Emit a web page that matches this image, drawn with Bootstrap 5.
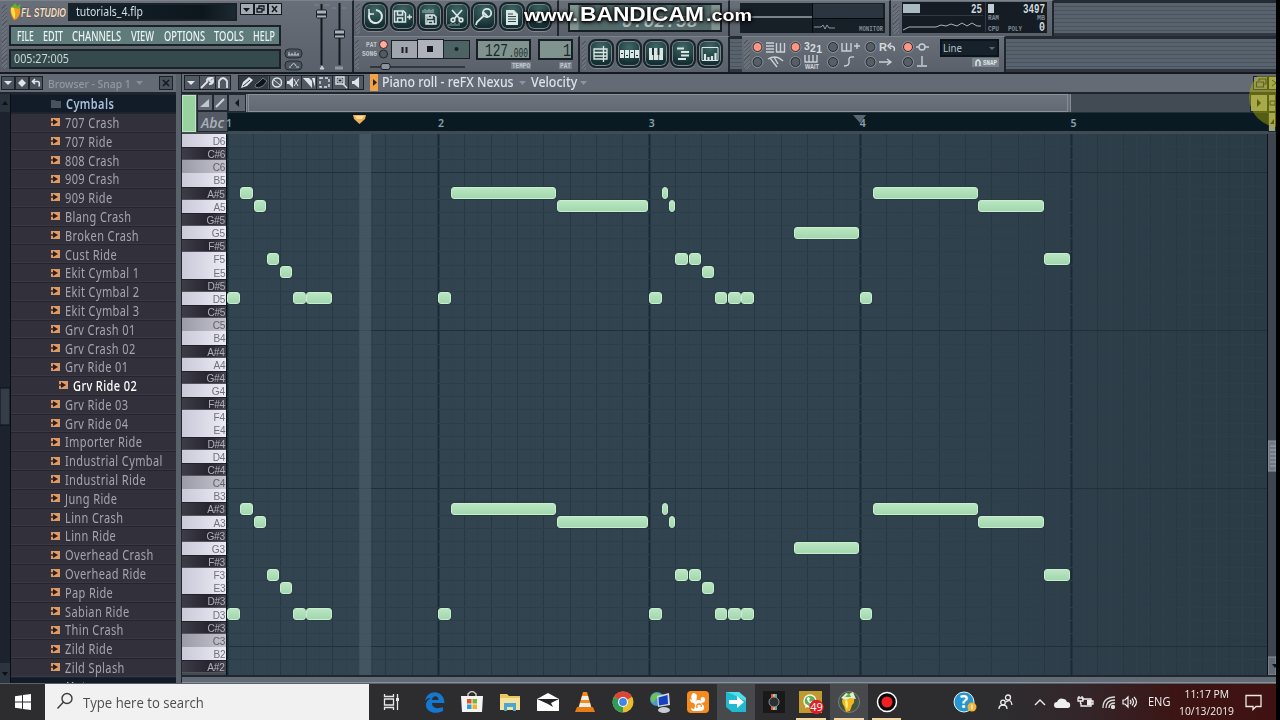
<!DOCTYPE html>
<html lang="en">
<head>
<meta charset="utf-8">
<meta name="viewport" content="width=device-width, initial-scale=1">
<title>FL Studio - tutorials_4.flp</title>
<link rel="stylesheet" href="https://cdn.jsdelivr.net/npm/bootstrap@5.3.0/dist/css/bootstrap.min.css">
<style>
html,body{height:100%}
body{width:1280px;height:720px;overflow:hidden;background:#000;font-family:"Noto Sans","Liberation Sans",sans-serif;line-height:1;color:#d6dee6}
svg{display:block;flex:none}
.app{width:1276px;height:720px;background:#5a616a}
.top{height:74px;border-bottom:2px solid #151a20}
.panel{background:linear-gradient(#686f78,#596069);border-right:2px solid #20262d;border-top:1px solid #7b828a;flex:none;overflow:hidden}
.grip{width:6px;background:repeating-linear-gradient(135deg,#6a717a 0 2px,#505760 2px 3px);flex:none}
.stripes{background:repeating-linear-gradient(#59636e 0 3px,#4a535d 3px 4px);border-top:3px solid #252b33;border-bottom:3px solid #303740}
.sink{border:2px solid #1a2228}
.titlebox{height:18px;background:linear-gradient(90deg,#14232b,#0c171d 80%,#1a2a30);font-size:12px}
.menubox{height:21px;background:#607b7b;color:#e9f5f4;font-size:15px;font-weight:500}
.hintbox{height:20px;background:#344a4c;font-size:12.5px;color:#c5d6d5}
.winb{width:14px;height:12px;background:#a3abb3;border:1px solid #151a20}
.rbtn{width:26px;height:29px;border-radius:8px;background:radial-gradient(circle at 50% 25%,#3f6866,#142f33 75%);border:2px solid #1a252a;box-shadow:0 0 0 1px #7b858b inset,0 1px 0 #828a91;display:flex;align-items:center;justify-content:center;flex:none}
.lcd{background:#81938f;border:2px solid #161f23}
.fit{display:inline-block;white-space:nowrap;transform-origin:0 50%;flex:none}
.main{height:609px}
.browser{width:176px;flex:none;background:#32303a}
.head{height:20px;background:#656b74;border-bottom:2px solid #20252c;flex:none}
.sq{width:14px;height:14px;background:#4b525b;border:1px solid #1c2127;flex:none;display:flex;align-items:center;justify-content:center}
.vs{width:11px;background:#1c232d;border-right:1px solid #0a0d12;flex:none}
.brow{height:18.8px;border-top:1px solid #25242d;border-bottom:1px solid #393943;font-size:14.5px;letter-spacing:.5px;color:#a5a5b1;padding-left:40px;flex:none}
.brow.folder{background:#121c28;color:#a9bcd8;font-weight:600;border-color:#1a2430}
.brow.chosen{color:#fff;padding-left:48px;font-weight:500}
.samp{width:9px;height:8px;background:#dc9a68;position:relative;margin-right:5px;flex:none}
.samp::after{content:"";position:absolute;left:2px;top:1px;border-left:5px solid #2c1c1c;border-top:3px solid transparent;border-bottom:3px solid transparent}
.samp::before{content:"";position:absolute;left:0;top:3px;width:4px;height:2px;background:#6d4636}
.gut{width:6px;background:#59616b;border-right:1px solid #20262c;flex:none}
.pbtn{width:15.5px;height:17px;border:1px solid #22282f;background:#616871;flex:none;display:flex;align-items:center;justify-content:center}
.ruler{background:#0a1a23;height:20px;border-bottom:1px solid #3c4c56;flex:1;position:relative;border-top:1px solid #23303a}
.ruler span{position:absolute;top:5px;font-size:10.5px;font-weight:600;color:#8ba0ad}
.keys{width:45px;height:542px;overflow:hidden;flex:none;border-right:1px solid #06131a}
.pkey{height:13.16px;font:11.5px/14.4px "Liberation Sans",sans-serif;text-align:right;padding-right:1px;letter-spacing:-.3px}
.pkey i{font-style:normal;display:inline-block;transform:scaleX(.88);transform-origin:100% 50%}
.pkey.w{background:linear-gradient(90deg,#c9c9d9,#ecebf4);color:#71717d}
.pkey.c{background:linear-gradient(90deg,#9b9ba8,#c4c3cd);color:#60606c}
.pkey.b{background:linear-gradient(90deg,#3d3c47,#272630 60%,#474650);color:#b0b0bc;border-top:1px solid #23222b;border-bottom:1px solid #55545e;line-height:12.4px}
.roll{position:relative;flex:1;height:541px;overflow:hidden;background:linear-gradient(90deg,#32444f,#31434e 60%,#2a3b46)}
.roll svg,.pnote,.play{position:absolute}
.pnote{height:12px;border-radius:3px;background:linear-gradient(#b8e6c2,#a3d7ae);border:1px solid #c9efd0;box-shadow:0 0 1px #14222b}
.play{left:132px;width:12px;top:0;bottom:0;background:#53656f88}
.bar{height:36px;background:linear-gradient(90deg,#2d2d2f 0 1000px,#33262a 1080px,#3c1413 1180px,#3f1210);font-family:"Open Sans","Noto Sans",sans-serif;color:#f0f0f0}
.find{width:324px;background:#f1f1f1;color:#4d4d4d;font-size:14px}
.tk{width:37.65px;height:36px;display:flex;align-items:center;justify-content:center;flex:none;position:relative}
.tk.on{background:#47494d}.tk.run::after{content:"";position:absolute;bottom:0;left:4px;right:4px;height:2px;background:#f2d6a0}
.halo{position:absolute;left:1249px;top:76px;width:27px;height:51px;overflow:hidden;pointer-events:none}
.halo::after{content:"";position:absolute;left:0;top:-9px;width:60px;height:60px;border-radius:50%;background:#b5b50070}
.wm{position:absolute;left:516px;top:0}
</style>
<script src="https://cdn.jsdelivr.net/npm/bootstrap@5.3.0/dist/js/bootstrap.bundle.min.js"></script>
</head>
<body>
<div class="app d-flex flex-column">
<header class="top d-flex">
  <!-- title, menu and hint -->
  <section class="panel d-flex" style="width:354px">
    <div class="grip" style="margin:4px 1px 4px 2px;width:5px"></div>
    <div class="d-flex flex-column" style="width:274px;padding-left:1px">
      <div class="d-flex align-items-start" style="height:23px;padding-top:2px">
        <svg width="59" height="20" viewBox="9 2 59 20"><path d="M11 6q-2 6 3 13q7-2 6-12q-3-4-9-1z" fill="#f39a20"/><path d="M11 7q0 7 4 11q1-6-1-11z" fill="#ffe24a"/><path d="M12 6l3-4 2 3 4-2-2 5z" fill="#5cb52c"/><text x="21" y="16" font-family="Liberation Sans" font-weight="700" font-style="italic" font-size="12.5" textLength="45" lengthAdjust="spacingAndGlyphs" fill="#f3dcc0" stroke="#27201c" stroke-width=".5" paint-order="stroke">FL STUDIO</text></svg>
        <div class="sink titlebox d-flex align-items-center ps-1" style="width:170px"><span class="fit" data-w="67" style="margin-left:2px">tutorials_4.flp</span></div>
        <div class="d-flex" style="margin-left:3px"><div class="winb"><svg width="12" height="10"><path d="M2 4h7l-3.500 4z" fill="#15191e"/></svg></div><div class="winb"><svg width="12" height="10" fill="none" stroke="#15191e" stroke-width="1.300"><path d="M4 4V2h5v4H7M2 4.500h5v3.500H2z"/></svg></div><div class="winb"><svg width="12" height="10" stroke="#15191e" stroke-width="1.500"><path d="M3 2l5 6M8 2L3 8"/></svg></div></div>
      </div>
      <div class="sink menubox d-flex align-items-center" style="width:272px;padding-left:6px;margin-top:1px">
        <span class="fit" data-w="17" data-g="9">FILE</span><span class="fit" data-w="20" data-g="9">EDIT</span><span class="fit" data-w="49" data-g="10">CHANNELS</span><span class="fit" data-w="23" data-g="10">VIEW</span><span class="fit" data-w="41" data-g="9">OPTIONS</span><span class="fit" data-w="30" data-g="9">TOOLS</span><span class="fit" data-w="22">HELP</span>
      </div>
      <div class="sink hintbox d-flex align-items-center" style="width:272px;padding-left:3px;margin-top:3px"><span class="fit" data-w="55">005:27:005</span></div>
    </div>
    <svg width="70" height="72" viewBox="282 1 70 72"><g fill="#4c545d" stroke="#232a31"><rect x="285" y="49" width="17" height="9" rx="4"/><rect x="285" y="61" width="17" height="9" rx="4"/></g><path d="M288 55h11M289 55v-3m3 3v-2m3 2v-3m3 3v-2M289 67h2m5 0h3M291 66q3-5 5 0" stroke="#c6ced5" fill="none"/><path d="M314 5h5M324 5h5M332 8h4M342 8h4" stroke="#7c848c"/><path d="M321.500 4v61M339.500 3v62" stroke="#14191f" stroke-width="2"/><g fill="#aab3ba" stroke="#1b2127"><rect x="316.500" y="10" width="10" height="8" rx="1"/><rect x="334.500" y="30" width="10" height="8" rx="1"/></g><path d="M317 14.500h9M335 34.500h9" stroke="#22282e" stroke-width="2"/><path d="M320 69h4l-2-3zM336 69.500v-3m2 3v-3m2 3v-3m2 3v-3" fill="#c6ced5" stroke="#c6ced5"/></svg>
  </section>
  <div class="d-flex flex-column flex-grow-1">
    <div class="d-flex" style="height:36px">
      <section class="panel d-flex" style="width:205px;gap:1.3px;padding-top:1px"><div class="grip" style="margin:2px 1px 2px 2px;width:4px"></div>
        <div class="rbtn"><svg width="20" height="20" fill="none" stroke="#dce7e5" stroke-width="2"><path d="M5 6a6.500 6.500 0 1 0 6-3"/><path d="M4 2v5h5" stroke-width="1.500"/></svg></div>
        <div class="rbtn"><svg width="20" height="20" fill="none" stroke="#dce7e5" stroke-width="1.500"><path d="M1.500 4h9l2 2v9h-11zM4.500 4v4h5V4M4.500 15v-4h5v4M14 10h5M16.500 7.500v5"/></svg></div>
        <div class="rbtn"><svg width="20" height="20" fill="none" stroke="#dce7e5" stroke-width="1.500"><path d="M6 8h8l2 2v7H6zM8 8v3h4V8M8 17v-3h5v3"/><path d="M3 3v3m2-4v4m2-3v3m2-4v4m2-3v3m2-4v4" stroke-width="1" opacity=".7"/></svg></div>
        <div class="rbtn"><svg width="20" height="20" fill="none" stroke="#dce7e5" stroke-width="1.700"><path d="M5 3l8 9M15 3l-8 9"/><circle cx="6" cy="13" r="1.800"/><circle cx="14" cy="13" r="1.800"/><path d="M2 17v2m2-3v3m2-2v2m2-3v3m2-2v2m2-3v3" stroke-width="1" opacity=".6"/></svg></div>
        <div class="rbtn"><svg width="20" height="20" fill="none" stroke="#dce7e5" stroke-width="1.800"><circle cx="13" cy="6" r="4.200"/><path d="M9 5l5 5M9.500 9L3 15l-1 3" /></svg></div>
        <div class="rbtn"><svg width="20" height="20"><path d="M4 3h8l4 4v11H4z" fill="#dce7e5"/><path d="M6 7h5M6 9.500h8M6 12h8M6 14.500h8" stroke="#29484a"/></svg></div>
        <div class="rbtn"><svg width="20" height="20"><circle cx="10" cy="10" r="5" fill="none" stroke="#dce7e5" stroke-width="2"/></svg></div>
      </section>
      <section class="panel d-flex" style="width:171px;padding:2px 6px 2px 9px"><svg class="lcd" width="154" height="29" viewBox="0 0 154 29"><rect width="154" height="29" fill="#53696a"/><text x="50" y="26" font-family="Liberation Mono" font-weight="700" font-style="italic" font-size="19" textLength="88" lengthAdjust="spacingAndGlyphs" fill="#b4c3c2">0:02:58</text></svg></section>
      <section class="panel d-flex" style="width:161px;padding:2px 5px 2px 10px"><svg width="145" height="30" viewBox="740 3 145 30"><rect x="740" y="3" width="145" height="30" fill="#171f27"/><rect x="813" y="4" width="70" height="14" fill="#2b3540"/><path d="M812.500 3v30M813 18.500h71" stroke="#05090d"/><path d="M741 17h71" stroke="#dfe6ea"/><path d="M814 27h7l2-2 2 4 2-4 2 3h6" stroke="#8d98a3" fill="none"/><text x="859" y="31" font-size="7" font-weight="700" font-family="Liberation Mono" textLength="24" lengthAdjust="spacingAndGlyphs" fill="#7f8993">MONITOR</text></svg></section>
      <section class="panel d-flex" style="width:163px;padding-top:1px"><div class="grip" style="margin:2px 3px 2px 2px"></div><svg width="145" height="31" viewBox="902 2 145 31"><rect x="902" y="2" width="145" height="31" fill="#151c24"/><path d="M903 15.500h80M985.500 2v30" stroke="#303b46"/><rect x="903" y="4" width="17" height="9" fill="#a9bbc1"/><rect x="988" y="4" width="6" height="9" fill="#c0cdd0"/><path d="M903 30l6-3h27l5-2 5 1 5-2 6 2 5-3 5 3 5-3 5 3h4" fill="none" stroke="#a8b4ba"/><g font-family="Liberation Mono" font-weight="700" fill="#cfd8dc"><text x="971" y="13" font-size="12" textLength="11" lengthAdjust="spacingAndGlyphs">25</text><text x="1023" y="13" font-size="12" textLength="22" lengthAdjust="spacingAndGlyphs">3497</text><text x="1039" y="31" font-size="12" textLength="6" lengthAdjust="spacingAndGlyphs">0</text><g font-size="7" fill="#7f8993"><text x="988" y="20" textLength="11" lengthAdjust="spacingAndGlyphs">RAM</text><text x="1037" y="20" textLength="8" lengthAdjust="spacingAndGlyphs">MB</text><text x="988" y="31" textLength="11" lengthAdjust="spacingAndGlyphs">CPU</text><text x="1008" y="31" textLength="14" lengthAdjust="spacingAndGlyphs">POLY</text></g></g></svg></section>
      <div class="stripes flex-grow-1"></div>
    </div>
    <div class="d-flex" style="height:36px">
      <section class="panel d-flex" style="width:226px"><div class="grip" style="margin:3px 1px;width:4px"></div>
        <svg width="217" height="35" viewBox="360 37 217 35"><g font-family="Liberation Mono" font-weight="700" font-size="7" fill="#c0c8cf"><text x="366" y="47" textLength="11" lengthAdjust="spacingAndGlyphs">PAT</text><text x="362" y="56" textLength="15" lengthAdjust="spacingAndGlyphs">SONG</text><rect x="511" y="62" width="20" height="7" fill="#78818a"/><text x="512" y="68" textLength="18" lengthAdjust="spacingAndGlyphs">TEMPO</text><rect x="559" y="62" width="13" height="7" fill="#78818a"/><text x="560" y="68" textLength="11" lengthAdjust="spacingAndGlyphs">PAT</text></g><circle cx="383.500" cy="44.500" r="4" fill="#ffab9a" stroke="#33272a"/><circle cx="383.500" cy="54" r="4" fill="#515b60" stroke="#20272b"/><g stroke="#1a2025"><rect x="391.500" y="40.500" width="26" height="18" fill="#a1a5ae"/><rect x="417.500" y="39.500" width="26" height="19" fill="#aeb2ba"/><rect x="443.500" y="40.500" width="26" height="18" fill="#4d6263"/></g><path d="M402.500 47v6M406.500 47v6" stroke="#1a1e22" stroke-width="2"/><rect x="427" y="46" width="6" height="6" fill="#15181b"/><circle cx="456.500" cy="49" r="2" fill="#172124"/><path d="M370 67h95" stroke="#232a30" stroke-width="1.500"/><rect x="381" y="63.500" width="9" height="6" rx="2" fill="#8b949c" stroke="#1d2328"/><g fill="#81938f" stroke="#161f23" stroke-width="2"><rect x="477" y="40" width="53" height="19"/><rect x="539" y="40" width="33" height="19"/></g><g font-family="Liberation Mono" fill="#17272a"><text x="485" y="56" font-size="18" textLength="23" lengthAdjust="spacingAndGlyphs">127</text><text x="509" y="57" font-size="12" textLength="19" lengthAdjust="spacingAndGlyphs">.000</text><text x="563" y="56" font-size="18" textLength="8" lengthAdjust="spacingAndGlyphs">1</text></g></svg>
      </section>
      <section class="panel d-flex" style="width:150px;gap:1.3px;padding-top:2px"><div class="grip" style="margin:2px 1px 2px 2px;width:4px"></div>
        <div class="rbtn"><svg width="20" height="20" fill="none" stroke="#dce7e5" stroke-width="1.300"><path d="M3 5h13v10H3zM3 8.500h13M3 12h13M12.500 2v16"/></svg></div>
        <div class="rbtn"><svg width="20" height="20" fill="#dce7e5"><path d="M1 6h4v8H1zM6 6h4v8H6zM11 6h4v8h-4zM16 6h4v8h-4z"/><path d="M2 9h2v1H2zM7 11h2v1H7zM12 8h2v1h-2zM17 11h2v1h-2z" fill="#163033"/></svg></div>
        <div class="rbtn"><svg width="20" height="20" fill="#dce7e5"><path d="M3 4h14v12H3z"/><path d="M6 4h2v7H6zM11.500 4h2v7h-2zM7 11h.700v5H7zM12.400 11h.700v5h-.700z" fill="#163033"/></svg></div>
        <div class="rbtn"><svg width="20" height="20" stroke="#dce7e5" stroke-width="2"><path d="M4 4.500h7M8 8h8M8 11.500h8M5 15h8"/></svg></div>
        <div class="rbtn"><svg width="20" height="20" fill="none" stroke="#dce7e5"><path d="M2 3.500h16v13H2z"/><path d="M5 16v-6M8.500 16v-3M12 16v-4M15.500 16v-7" stroke-width="2.200"/></svg></div>
      </section>
      <div class="stripes" style="width:12px"></div>
      <section class="panel d-flex" style="width:264px"><div class="grip" style="margin:3px 0 3px 2px;width:6px"></div>
        <svg width="254" height="36" viewBox="750 37 254 36"><g id="leds"></g><g fill="none" stroke="#c8cfd5" stroke-width="1.400"><path d="M766 43h8M766 46h8M766 49h8M766 52h8M776.500 43v9h8v-9M780.500 43v9M768 59q8-5 15 2M770 58l7 9M774 57l4 7"/><path d="M805 55v7h12v-7M809 55v7M813 55v7M842 43v8h9v-8M846.500 43v8M854 46h6M857 43v6M844 66q6 0 5-5t5-4M879 62h11M887 59l4 3-4 3M916 47h3M925 47h4"/><circle cx="922" cy="47" r="3"/><path d="M917 66h10M922 65v-9"/></g><g fill="#d3dae0" font-weight="700" font-family="Liberation Sans"><text x="804" y="50" font-size="10.500" textLength="18">3<tspan dy="2">2</tspan><tspan dy="1">1</tspan></text><text x="879" y="51" font-size="11">R</text><text x="805" y="69" font-size="6.500" textLength="14" lengthAdjust="spacingAndGlyphs">WAIT</text></g><path d="M894 51q2-5-4-5M891 43l-3 3 3 3" fill="none" stroke="#d3dae0" stroke-width="1.500"/><rect x="941" y="40" width="57" height="16" fill="#17212b" stroke="#0c1319" stroke-width="2"/><text x="943" y="52" font-family="Noto Sans" font-size="11" textLength="19" lengthAdjust="spacingAndGlyphs" fill="#b8c3cb">Line</text><path d="M989 47h6l-3 3z" fill="#5c6873"/><rect x="972" y="58" width="27" height="9" fill="#7b848d"/><path d="M976 66v-4q2-4 4 0v4" fill="none" stroke="#dce2e7" stroke-width="1.500"/><text x="983" y="65" font-size="7" font-weight="700" font-family="Liberation Mono" textLength="14" lengthAdjust="spacingAndGlyphs" fill="#dce2e7">SNAP</text></svg>
      </section>
      <div class="stripes flex-grow-1"></div>
    </div>
  </div>
</header>

<main class="main d-flex overflow-hidden">
  <aside class="browser d-flex flex-column">
    <div class="head d-flex align-items-center" style="padding-left:1px">
      <div class="sq"><svg width="10" height="8"><path d="M1 2h8L5 6z" fill="#dfe5ea"/></svg></div><div class="sq"><svg width="10" height="10"><path d="M5 1l4 4-4 4-4-4z" fill="#dfe5ea"/></svg></div><div class="sq"><svg width="10" height="10" fill="none" stroke="#dfe5ea" stroke-width="1.600"><path d="M4 1L1.500 3.500 4 6M2 3.500h5q2 0 1 5"/></svg></div>
      <span class="fit" data-w="83" style="margin-left:5px;font-size:11px;font-weight:500;color:#9299a2">Browser - Snap 1</span>
      <svg width="10" height="6" class="ms-1"><path d="M1 1h7L4.500 5z" fill="#858d96"/></svg>
      <div class="sq ms-auto" style="margin-right:3px"><svg width="10" height="10" stroke="#14191f" stroke-width="1.600"><path d="M2 2l6 6M8 2L2 8"/></svg></div>
    </div>
    <div class="d-flex flex-grow-1 overflow-hidden">
      <div class="vs d-flex flex-column"><svg width="10" height="589"><rect width="10" height="18" fill="#29313b"/><path d="M2 11h6L5 7z" fill="#0c1015"/><rect y="294" width="10" height="37" fill="#353d48" stroke="#0c1118"/><rect y="569" width="10" height="20" fill="#2c343f"/><path d="M2 578h6l-3 4z" fill="#0c1015"/></svg></div>
      <div id="files" class="flex-grow-1 overflow-hidden"></div>
    </div>
  </aside>
  <div class="gut"></div>
  <section class="flex-grow-1 d-flex flex-column overflow-hidden" style="background:#424a53">
    <div class="head d-flex align-items-center" style="padding-left:1px">
      <svg width="195" height="18" viewBox="183 75 195 18"><g fill="#525962" stroke="#1b2026"><rect x="184.500" y="76.500" width="46" height="14"/><rect x="238.500" y="76.500" width="125" height="14"/></g><path d="M199.500 77v14M215.500 77v14M253.500 77v14M269.500 77v14M285.500 77v14M301.500 77v14M316.500 77v14M332.500 77v14M348.500 77v14" stroke="#20262c"/><rect x="239" y="77" width="29" height="13" fill="#343a42"/><path d="M187 82h8l-4 4z" fill="#e0e5ea"/><g fill="none" stroke="#dde3e8" stroke-width="1.800"><path d="M201 89l7-7M207 83q-1-5 5-4l-3 2 2 2 2-2q1 4-4 4M219 89v-7q4-6 8 0v7"/><circle cx="277" cy="83.500" r="4.500" stroke-width="1.500"/><path d="M274 81l6 5" stroke-width="1"/><path d="M320 79h9v9h-9z" stroke-dasharray="3 2" stroke-width="1.400"/><path d="M336 78h8v7h-8zM343 85l4 4" stroke-width="1.400"/></g><g fill="#dde3e8"><path d="M241 89l2-6 6-5 4 3-6 6z"/><path d="M287 82h2l4-4v11l-4-4h-2z"/><path d="M303 79h6l3 3v7z"/><path d="M312 79h3v9z"/><path d="M352 82h2l5-4v11l-5-4h-2z"/></g><path d="M294 80l4 7M299 80l-5 7M338 80h4v3h-4z" stroke="#dde3e8" fill="#222"/><path d="M243 87l7-6" stroke="#30363d"/><path d="M255 88q-1-3 4-5l4-4 4 3-4 5q-5 3-8 1z" fill="#11151a" stroke="#707982"/><rect x="370" y="75" width="8" height="17" fill="#f0a14a"/><path d="M373 80l4 3.500-4 3.500z" fill="#302318"/></svg>
      <span class="fit" data-w="132" style="font-size:13.5px;color:#dbe2e9;font-weight:500;margin-left:4px">Piano roll - reFX Nexus</span>
      <svg width="17" height="6"><path d="M5 1h7L8.500 5z" fill="#8c949d"/></svg>
      <span class="fit" data-w="46" style="font-size:13.5px;color:#dbe2e9;font-weight:500">Velocity</span>
      <svg width="12" height="6"><path d="M3 1h7L6.500 5z" fill="#8c949d"/></svg>
      <div class="sq ms-auto" style="background:#858b91;width:15px"><svg width="12" height="12" fill="none" stroke="#22282e" stroke-width="1.200"><path d="M4 4V2h7v5H9M1.500 5h7v5h-7z"/></svg></div><div class="sq" style="width:8px;background:#9ea380;border-right:0"><svg width="6" height="8" stroke="#22282e"><path d="M2 1l4 3-4 3" fill="none"/></svg></div>
    </div>
    <div class="d-flex" style="height:39px">
      <div style="width:14px;margin:1px 1px 1px 0;background:#98d29f;border:1px solid #bde6c1;flex:none"></div>
      <div style="width:31px;flex:none"><div class="d-flex"><div class="pbtn"><svg width="12" height="12"><path d="M1 10L10 2v8z" fill="#bfc6cd"/></svg></div><div class="pbtn"><svg width="12" height="12"><path d="M2 10l8-8" stroke="#cdd4da" stroke-width="2"/></svg></div></div>
        <div class="text-center" style="border:1px solid #22282f;height:21px;background:#535a64;color:#a8b1ba;font:italic 600 14px/21px 'Open Sans',sans-serif">Abc</div></div>
      <div class="flex-grow-1 d-flex flex-column">
        <div class="d-flex" style="height:18px"><div class="pbtn" style="width:18px;height:18px"><svg width="10" height="10"><path d="M7 1v8L3 5z" fill="#14191e"/></svg></div>
          <div style="width:825px;background:linear-gradient(#6d747d,#626973);border:1px solid #8a929a;border-left:3px double #858d96;border-right:4px double #858d96"></div>
          <div class="flex-grow-1"></div><div class="pbtn" style="width:18px;height:18px;background:#9ea380"><svg width="10" height="10"><path d="M3 1v8l4-4z" fill="#14191e"/></svg></div><div class="pbtn" style="width:8px;height:18px;background:#9ea380"><svg width="6" height="10"><path d="M1 3h5v4H1z" fill="none" stroke="#22282e"/></svg></div></div>
        <div class="d-flex"><div class="ruler" id="ruler"><svg width="640" height="18" style="position:absolute;left:-1px;top:1px"><path d="M126 1h13l-1 4-5.500 5-5.500-5z" fill="#f2ae53"/><path d="M128 2h9l-2 3h-5z" fill="#ffe0a0"/><path d="M626 1h13l-6 8z" fill="#586671"/></svg></div><div class="pbtn" style="width:8px;height:20px;background:#9ea380"><svg width="6" height="8"><path d="M1 6l4-5v5z" fill="#14191e"/></svg></div></div>
      </div>
    </div>
    <div class="d-flex" style="height:541px;margin-top:1px">
      <div class="keys" id="keys"></div>
      <div class="roll" id="roll"></div>
      <div style="width:9px;background:#3e454e;border-left:1px solid #0b1218;flex:none"><svg width="8" height="541"><rect y="307" width="8" height="30" fill="#707880" stroke="#9199a0"/><path d="M2 312h6m-6 4h6m-6 4h6m-6 4h6m-6 4h6m-6 4h6" stroke="#a0a8ae"/><rect y="523" width="8" height="18" fill="#626a73" stroke="#8a929a"/><path d="M4 530h6l-3 4z" fill="#14191e"/></svg></div>
    </div>
    <div class="flex-grow-1" style="background:#626b75;border-top:2px solid #20272e;border-bottom:1px solid #89929a"></div>
  </section>
</main>

<footer class="bar d-flex" style="margin-top:1px">
  <div class="d-flex align-items-center" style="width:45px;padding-left:15px"><svg width="16" height="16" fill="#fff"><path d="M0 2.300L7 1.200v6.300H0zM8 1.100L16 0v7.500H8zM0 8.500h7v6.300L0 13.700zM8 8.500h8V16l-8-1.100z"/></svg></div>
  <div class="find d-flex align-items-center"><svg width="18" height="18" style="margin:-2px 9px 0 11px" fill="none" stroke="#3c3c3c" stroke-width="1.400"><circle cx="11" cy="6.500" r="5"/><path d="M7.500 10L1.500 16.500"/></svg><span class="fit" data-w="121" style="padding-top:2px">Type here to search</span></div>
  <div class="tk" style="width:46px;margin-right:1px"><svg width="18" height="16" fill="none" stroke="#e8e8e8" stroke-width="1.300"><path d="M1.500 0v2.500h9V0M1.500 5h9v6h-9zM1.500 16v-2.500h9V16M14.500 0v16"/><path d="M13 4h3v3h-3z" fill="#e8e8e8" stroke="none"/></svg></div>
  <div class="tk"><svg width="22" height="22"><path d="M1 10C3-2 20-2 20.500 12H8c0 6 7 6 11 4v4c-8 4-17 1-17-6 0-4 3-6 5-7-3 0-5 1-6 3zm7-1h6.500c0-5-6-5-6.500 0z" fill="#1478d0"/></svg></div>
  <div class="tk"><svg width="24" height="24"><path d="M8 7V4q4-5 8 0v3" fill="none" stroke="#c9c9c9" stroke-width="1.500"/><path d="M1 6h22l-1 16H2z" fill="#f4f4f4"/><path d="M7 9h4.500v4.500H7z" fill="#e4512b"/><path d="M12.500 9H17v4.500h-4.500z" fill="#7db52d"/><path d="M7 14.500h4.500V19H7z" fill="#2b9fd9"/><path d="M12.500 14.500H17V19h-4.500z" fill="#f3b322"/></svg></div>
  <div class="tk"><svg width="22" height="20"><path d="M1 2h7l2 2h11v14H1z" fill="#e9c765"/><path d="M1 6h20v12H1z" fill="#f8e29a"/><path d="M5 19v-8h12v8h-3v-4H8v4z" fill="#47a8d8"/></svg></div>
  <div class="tk"><svg width="24" height="20"><path d="M1 7l11-6 11 6v12H1z" fill="#fff"/><path d="M1 7h22l-8 4 2 4-5-3z" fill="#242424"/></svg></div>
  <div class="tk"><svg width="22" height="22"><path d="M9 1h4l5 17H4z" fill="#f28a1c"/><path d="M8 5h6l1 4H7zM6 12h10l1 4H5z" fill="#f2efea"/><path d="M3 16h16l2 5H1z" fill="#e97b13"/></svg></div>
  <div class="tk"><svg width="22" height="22" viewBox="-11 -11 22 22"><circle r="10.500" fill="#e9be2e"/><path d="M0 0L-9.100-5.200A10.500 10.500 0 0 1 9.100-5.200z" fill="#db4437"/><path d="M0 0L-9.100-5.200A10.500 10.500 0 0 0 0 10.500z" fill="#2f9c57"/><circle r="5" fill="#fff"/><circle r="3.900" fill="#4285e8"/></svg></div>
  <div class="tk"><svg width="24" height="24"><circle cx="8" cy="9" r="7" fill="#479bc4"/><path d="M3 5q4-4 9 0l-5 4-3 4q-4-4-1-8z" fill="#71bf58"/><path d="M8 6l12-3 1 12-12 2z" fill="#cfd7df"/><path d="M9.500 7.500l9-2.500.500 9-9 1.500z" fill="#1740be"/><ellipse cx="15" cy="20" rx="6" ry="3" fill="#c6ccd2"/></svg></div>
  <div class="tk"><svg width="24" height="24"><rect x="1" y="1" width="22" height="22" rx="4" fill="#f58a1e"/><path d="M7 3q4 0 4 4 0 3-2 4 4-2 6 0-1-3 1-4 4 0 3 4-1 2-4 2l3 3q1 5-4 5H8q-3 0-3-3l3 1q2-4 0-6-4 0-4-4l2 1Q4 6 7 3z" fill="#fff"/><path d="M11 18q-1-4 2-4t2 3" fill="none" stroke="#f58a1e" stroke-width="1.300"/></svg></div>
  <div class="tk on"><svg width="22" height="22"><path d="M1 1h13l7 6v14H7l-6-5z" fill="#20b9d0"/><path d="M1 1h13l7 6v3L7 3z" fill="#4de0e8"/><path d="M4 9h8V5l7 6-7 6v-4H4z" fill="#fff"/></svg></div>
  <div class="tk"><svg width="22" height="22"><rect width="22" height="22" fill="#191919"/><path d="M8 3h6v16H8z" fill="#59a5b8"/><path d="M8 3h2v16H8z" fill="#df5948"/><path d="M10 3h2v16h-2z" fill="#e9b950"/><circle cx="11" cy="11" r="5" fill="#2b2f33" stroke="#8c9297"/></svg></div>
  <div class="tk run"><svg width="26" height="24" style="overflow:visible"><rect x="1" y="1" width="23" height="22" fill="#c09a2e"/><circle cx="12" cy="11" r="6" fill="#5daf57" stroke="#f3f3e8" stroke-width="1.500"/><path d="M7 18l1-4 3 2z" fill="#fff"/><path d="M9 8q0 5 5 6l1-2-2-1-1 1-1-2 1-1-1-2z" fill="#fff"/><circle cx="18.500" cy="17" r="7.200" fill="#df1f25"/><text x="18.500" y="21" text-anchor="middle" font-family="Open Sans" font-size="11" fill="#fff">49</text></svg></div>
  <div class="tk on run"><svg width="24" height="24"><circle cx="12" cy="12" r="10.500" fill="#45533f" stroke="#798178"/><path d="M5 10q0 4 2 6l2 6 4-1 2-6q3-2 2-7-5-4-12 2z" fill="#f2b61e"/><path d="M8 11q0 5 2 8 2-5 0-9z" fill="#ffee75"/><path d="M4 8l5-5 3 1 4-2 3 7-6-1-4 2z" fill="#dfeed4"/><path d="M8 7l4-4 2 4z" fill="#5ab434"/></svg></div>
  <div class="tk run"><svg width="22" height="22"><circle cx="11" cy="11" r="9.500" fill="#070707" stroke="#fff" stroke-width="1.500"/><circle cx="11" cy="11" r="5.500" fill="#f02020"/></svg></div>
  <div class="tk" style="margin-left:41px"><svg width="24" height="24"><circle cx="11" cy="12" r="10" fill="#2795ce" stroke="#e7f3fa"/><text x="11" y="18" text-anchor="middle" font-family="Open Sans" font-size="17" font-weight="700" fill="#fff">?</text><circle cx="19" cy="17" r="4.500" fill="#edb539"/><path d="M19 14.500v5" stroke="#fff"/></svg></div>
  <svg width="16" height="16" style="margin:10px 0 0 14px" fill="none" stroke="#eee" stroke-width="1.300"><circle cx="10" cy="3.500" r="2.500"/><circle cx="5" cy="8.500" r="2.300"/><path d="M1 15q0-4 4-4t4 4M8 8q5-4 6 3"/></svg>
  <svg width="12" height="8" style="margin:14px 0 0 20px" fill="none" stroke="#eee" stroke-width="1.400"><path d="M1 7l5-5 5 5"/></svg>
  <svg width="17" height="12" style="margin:13px 0 0 8px"><path d="M3 11a3 3 0 0 1 0-6q2-5 7-3 2 0 3 3 4 0 3 5l-2 1z" fill="#eee"/></svg>
  <svg width="17" height="14" style="margin:11px 0 0 6px" fill="none" stroke="#eee" stroke-width="1.300"><path d="M5 4h9v7H4V8M14 6h2v3h-2M2 1v2M5 1v2M1 3h5v3H1zM3.500 6v3"/><path d="M10 5h4v5h-4z" fill="#eee" stroke="none"/></svg>
  <svg width="14" height="14" style="margin:11px 0 0 8px" fill="none" stroke="#ddd" stroke-width="1.300"><path d="M1 13Q1 2 13 2M4 13q0-8 9-8M7 13q0-5 6-5"/><circle cx="11" cy="12" r="1.500" fill="#ddd"/></svg>
  <svg width="16" height="14" style="margin:11px 0 0 6px" fill="none" stroke="#eee" stroke-width="1.200"><path d="M1 5h2l3-3v10L3 9H1zM8 5q2 2 0 4M10 3.500q3 3.500 0 7M12 2q5 5 0 10"/></svg>
  <div class="d-flex align-items-center" style="margin-left:10px;font-size:12px"><span class="fit" data-w="22">ENG</span></div>
  <div class="d-flex flex-column align-items-center" style="margin-left:8px;width:56px;font-size:11.500px;padding-top:2px;line-height:16.500px"><span class="fit" data-w="45">11:17 PM</span><span class="fit" data-w="55">10/13/2019</span></div>
  <svg width="17" height="17" style="margin:10px 0 0 11px" fill="none" stroke="#f0e6e4" stroke-width="1.300"><path d="M1 1.500h15v11h-5l-3 3v-3H1z"/></svg>
</footer>
</div>

<div class="halo"></div>
<svg class="wm" width="246" height="34" viewBox="516 0 246 34"><g font-family="Liberation Sans" font-weight="700" fill="#fff" style="filter:drop-shadow(0 0 2px #000) drop-shadow(0 1px 1px #000)"><text x="524" y="21" font-size="17" textLength="54" lengthAdjust="spacingAndGlyphs">www.</text><text x="580" y="21" font-size="20" textLength="124" lengthAdjust="spacingAndGlyphs">BANDICAM</text><text x="706" y="21" font-size="17" textLength="46" lengthAdjust="spacingAndGlyphs">.com</text></g></svg>

<script>
// Squeeze labels to the narrow widths of the program's own typefaces
function squeeze(el, w, gap){
  const m = el.offsetWidth;
  el.style.transform = `scaleX(${w / m})`;
  el.style.marginRight = (w - m + gap) + 'px';
}
// Sample browser
const files = ['Cymbals','707 Crash','707 Ride','808 Crash','909 Crash','909 Ride','Blang Crash','Broken Crash','Cust Ride','Ekit Cymbal 1','Ekit Cymbal 2','Ekit Cymbal 3','Grv Crash 01','Grv Crash 02','Grv Ride 01','Grv Ride 02','Grv Ride 03','Grv Ride 04','Importer Ride','Industrial Cymbal','Industrial Ride','Jung Ride','Linn Crash','Linn Ride','Overhead Crash','Overhead Ride','Pap Ride','Sabian Ride','Thin Crash','Zild Ride','Zild Splash','Hats'];
const folderIcon = '<svg width="10" height="9" style="margin-right:5px"><path d="M0 1h4l1 1h5v7H0z" fill="#48525f"/></svg>';
document.getElementById('files').innerHTML = files.map(f => {
  const folder = f === 'Cymbals' || f === 'Hats', chosen = f === 'Grv Ride 02';
  return `<div class="brow d-flex align-items-center ${folder ? 'folder' : ''} ${chosen ? 'chosen' : ''}">${folder ? folderIcon : '<span class="samp"></span>'}<span class="fname fit">${f}</span></div>`;
}).join('');
const names = [...document.querySelectorAll('.fname')];
const ratio = 98 / names[19].offsetWidth;
names.forEach(n => squeeze(n, n.offsetWidth * ratio, 0));
document.querySelectorAll('[data-w]').forEach(e => {
  const centred = e.parentElement.classList.contains('flex-column');
  if (centred) { e.style.transformOrigin = '50% 50%'; e.style.transform = `scaleX(${e.dataset.w / e.offsetWidth})`; }
  else squeeze(e, +e.dataset.w, +(e.dataset.g || 0));
});
// Piano keys, D6 down to A#2
const tones = ['C','C#','D','D#','E','F','F#','G','G#','A','A#','B'];
let keys = '';
for (let n = 74; n >= 34; n--) {
  const t = tones[n % 12], cls = t.length > 1 ? 'b' : t === 'C' ? 'c' : 'w';
  keys += `<div class="pkey ${cls}"><i>${t}${Math.floor(n / 12)}</i></div>`;
}
document.getElementById('keys').innerHTML = keys;
// Grid
const step = 13.18, rowH = 13.16;
let g = '';
for (let i = 0; i < 80; i++) {
  const x = Math.round(i * step) + .5;
  const s = i % 16 === 0 ? ['#192a35', 2] : i % 2 === 0 ? ['#263843', 1] : ['#2f414c', 1];
  g += `<path d="M${x} 0V541" stroke="${s[0]}" stroke-width="${s[1]}"/>`;
}
for (let r = 1; r < 41; r++) {
  const y = Math.round(r * rowH) - .5;
  g += `<path d="M0 ${y}H1045" stroke="${r % 12 === 3 ? '#1f303b' : '#2c3e49'}"/>`;
}
// Notes: start and length in sixteenths, row counted from D6
const phrase = [[0,1,12],[1,1,4],[2,1,5],[3,1,9],[4,1,10],[5,1,12],[6,2,12],[16,1,12],[17,8,4],[25,7,5],[32,1,12],[33,.5,4],[33.5,.5,5],[34,1,9],[35,1,9],[36,1,10],[37,1,12],[38,1,12],[39,1,12],[43,5,7],[48,1,12],[49,8,4],[57,5,5],[62,2,9]];
const notes = [...phrase, ...phrase.map(([s, l, r]) => [s, l, r + 24])];
document.getElementById('roll').innerHTML = `<svg width="1045" height="541">${g}</svg><div class="play"></div>` +
  notes.map(([s, l, r]) => `<div class="pnote" style="left:${s * step + .2}px;top:${r * rowH + .4}px;width:${l * step - .6}px"></div>`).join('');
for (let b = 0; b < 5; b++) document.getElementById('ruler').insertAdjacentHTML('beforeend', `<span style="left:${b * 16 * step - (b ? 1 : 2)}px">${b + 1}</span>`);
// Option lamps
document.getElementById('leds').innerHTML = [757.5,795.5,833,870.5,908].map((x, i) => `<circle cx="${x}" cy="47" r="4.500" fill="${[0,1,4].includes(i) ? '#ff9582' : '#565e66'}" stroke="#21272c"/><circle cx="${x}" cy="62" r="4.500" fill="#565e66" stroke="#21272c"/><circle cx="${x}" cy="47" r="5.500" fill="none" stroke="#9aa1a7" stroke-width=".7"/><circle cx="${x}" cy="62" r="5.500" fill="none" stroke="#9aa1a7" stroke-width=".7"/>`).join('');
</script>
</body>
</html>
